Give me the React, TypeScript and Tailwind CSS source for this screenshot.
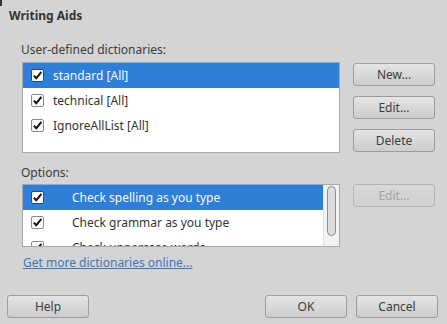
import React from 'react';

const Check = ({ selected }: { selected?: boolean }) => (
  <span
    className={`flex h-[13px] w-[13px] shrink-0 items-center justify-center rounded-[2px] border bg-white ${
      selected ? 'border-[#1c4f86]' : 'border-[#8a8a8a]'
    }`}
  >
    <svg width="11" height="11" viewBox="0 0 11 11">
      <path d="M1.8 5.6 L4.3 8.3 L9.4 1.8" fill="none" stroke="#111" strokeWidth="2" />
    </svg>
  </span>
);

const Btn = ({ label, disabled, className = '' }: { label: string; disabled?: boolean; className?: string }) => (
  <button
    className={`flex h-[23px] w-[82px] items-center justify-center rounded-[3px] border bg-gradient-to-b text-[12px] ${
      disabled
        ? 'border-[#b3b3b3] from-[#d8d8d8] to-[#cfcfcf] text-[#a3a3a3]'
        : 'border-[#9c9c9c] from-[#e4e4e4] to-[#cdcdcd] text-[#3c3c3c]'
    } ${className}`}
  >
    {label}
  </button>
);

export default function App() {
  const dicts = ['standard [All]', 'technical [All]', 'IgnoreAllList [All]'];
  const options = ['Check spelling as you type', 'Check grammar as you type', 'Check uppercase words'];

  return (
    <div
      className="relative h-[324px] w-[447px] overflow-hidden bg-[#d4d4d4] text-[12px] text-[#3c3c3c]"
      style={{ fontFamily: '"Noto Sans", "Open Sans", sans-serif' }}
    >
      <div className="absolute left-0 top-0 h-[6px] w-[2px] bg-[#333]" />
      <div className="pl-[9px] pt-[7px] text-[12px] font-bold leading-[17px] text-[#333]">Writing Aids</div>

      <div className="pl-[21px] pt-[17px] leading-[17px]">User-defined dictionaries:</div>

      <div className="ml-[22px] mt-[4px] flex items-start gap-[13px]">
        <div className="h-[91px] w-[318px] border border-[#a8a8a8] bg-white">
          {dicts.map((d, i) => (
            <div
              key={d}
              className={`flex h-[25px] items-center gap-[9px] pl-[8px] text-[12px] ${
                i === 0 ? 'bg-[#2f7fd9] text-[#f4f8fe]' : 'text-[#333]'
              }`}
            >
              <Check selected={i === 0} />
              <span>{d}</span>
            </div>
          ))}
        </div>
        <div className="mt-[1px] flex flex-col gap-[10px]">
          <Btn label="New..." />
          <Btn label="Edit..." />
          <Btn label="Delete" />
        </div>
      </div>

      <div className="pl-[21px] pt-[11px] leading-[17px]">Options:</div>

      <div className="ml-[22px] mt-[3px] flex items-start gap-[13px]">
        <div className="flex h-[63px] w-[318px] border border-[#a8a8a8] bg-white">
          <div className="h-full flex-1 overflow-hidden">
            {options.map((o, i) => (
              <div
                key={o}
                className={`flex h-[25px] shrink-0 items-center pl-[8px] ${
                  i === 0 ? 'bg-[#2f7fd9] text-[#f4f8fe]' : 'text-[#333]'
                }`}
              >
                <Check selected={i === 0} />
                <span className="ml-[28px]">{o}</span>
              </div>
            ))}
          </div>
          <div className="flex w-[16px] justify-center border-l border-[#e2e2e2] bg-[#f2f2f2] pt-[1px]">
            <div className="h-[50px] w-[9px] rounded-[5px] border border-[#8e8e8e] bg-[#dcdcdc]" />
          </div>
        </div>
        <Btn label="Edit..." disabled />
      </div>

      <div className="pl-[23px] pt-[7px] leading-[17px] text-[#3f77bd] underline">Get more dictionaries online...</div>

      <div className="absolute bottom-[6px] left-[7px] right-[9px] flex items-center">
        <Btn label="Help" />
        <div className="flex-1" />
        <Btn label="OK" className="w-[81px]" />
        <Btn label="Cancel" className="ml-[9px]" />
      </div>
    </div>
  );
}
